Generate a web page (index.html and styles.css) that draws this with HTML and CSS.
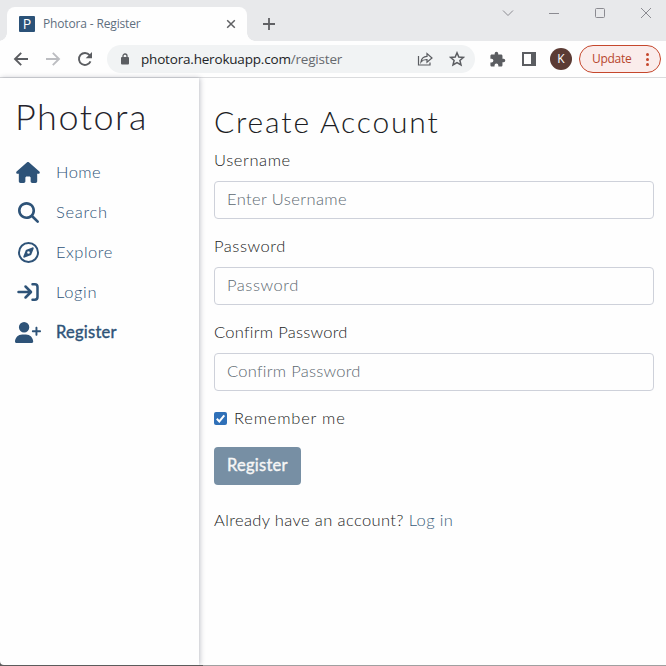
FILE: index.html
```html
<!DOCTYPE html>
<html lang="en">
<head>
<meta charset="utf-8">
<title>Photora - Register</title>
<link rel="stylesheet" href="styles.css">
</head>
<body>
<div class="window">
  <header class="tabstrip">
    <div class="tab">
      <span class="favicon">P</span>
      <span class="tab-title">Photora - Register</span>
      <svg class="tab-close" width="10" height="10" viewBox="0 0 10 10"><path d="M1.2 1.2l7.6 7.6M8.8 1.2L1.2 8.8"/></svg>
    </div>
    <svg class="new-tab" width="14" height="14" viewBox="0 0 14 14"><path d="M7 1v12M1 7h12"/></svg>
    <div class="window-controls">
      <svg width="12" height="12" viewBox="0 0 12 12"><path d="M1 3.5l5 5 5-5"/></svg>
      <svg width="12" height="12" viewBox="0 0 12 12"><path d="M1 6.5h10"/></svg>
      <svg width="12" height="12" viewBox="0 0 12 12"><rect x="1.5" y="1.5" width="9" height="9" rx="1"/></svg>
      <svg width="12" height="12" viewBox="0 0 12 12"><path d="M1 1l10 10M11 1L1 11"/></svg>
    </div>
  </header>
  <div class="toolbar">
    <svg class="nav-icon" width="16" height="16" viewBox="0 0 16 16"><path d="M15 8H2.5M8.2 1.8L2 8l6.200 6.200"/></svg>
    <svg class="nav-icon disabled" width="16" height="16" viewBox="0 0 16 16"><path d="M1 8h12.500M7.800 1.800L14 8l-6.200 6.200"/></svg>
    <svg class="nav-icon" width="16" height="16" viewBox="0 0 16 16"><path d="M13.500 10.300A6 6 0 1 1 12.600 4.100"/><path class="solid" d="M15 1v6.300H8.700z"/></svg>
    <div class="omnibox">
      <svg class="lock" width="8" height="12" viewBox="0 0 8 12"><rect x="0" y="4" width="8" height="7.500" rx="1"/><path d="M2 5V3a2 2 0 0 1 4 0v2"/></svg>
      <span class="url">photora.herokuapp.com<span class="path">/register</span></span>
      <svg class="share" width="16" height="16" viewBox="0 0 16 16"><path d="M1.500 5v9h11.500v-2.500"/><path d="M4 11c.5-4 2.800-5.600 6-5.700V2.500L15 7l-5 4.300V8.500C7.500 8.400 5.500 9 4 11z"/></svg>
      <svg class="star" width="16" height="16" viewBox="0 0 16 16"><path d="M8 1.800l1.800 4.200 4.600.4-3.500 3 1.100 4.500L8 11.500l-4 2.400 1.100-4.500-3.500-3 4.600-.4z"/></svg>
    </div>
    <svg class="puzzle" width="17" height="17" viewBox="0 0 24 24"><path d="M20.500 11H19V7c0-1.100-.9-2-2-2h-4V3.500a2.500 2.500 0 0 0-5 0V5H4c-1.100 0-2 .9-2 2v3.800h1.500a2.700 2.700 0 0 1 0 5.400H2V20c0 1.100.9 2 2 2h3.800v-1.500a2.700 2.700 0 0 1 5.400 0V22H17c1.100 0 2-.9 2-2v-4h1.500a2.500 2.500 0 0 0 0-5z"/></svg>
    <span class="sidepanel"></span>
    <span class="avatar">K</span>
    <div class="update"><span>Update</span><i class="dots"><b></b><b></b><b></b></i></div>
  </div>
  <div class="page">
    <nav class="sidebar">
      <div class="brand">Photora</div>
      <a class="item"><span class="icon"><svg width="24" height="21" viewBox="0 0 576 512"><path d="M575.8 255.500c0 18-15 32.100-32 32.100h-32l.7 160.200c0 2.700-.2 5.400-.5 8.100V472c0 22.100-17.900 40-40 40H392c-22.100 0-40-17.900-40-40V384c0-17.700-14.300-32-32-32H256c-17.700 0-32 14.300-32 32v88c0 22.100-17.900 40-40 40H104c-22.100 0-40-17.900-40-40V287.600H32c-18 0-32-14-32-32.100c0-9 3-17 10-24L266.400 8c7-7 15-8 22-8s15 2 21 7L564.800 231.500c8 7 12 15 11 24z"/></svg></span><span class="t-home">Home</span></a>
      <a class="item"><span class="icon"><svg width="21" height="21" viewBox="0 0 512 512"><path d="M416 208c0 45.900-14.900 88.300-40 122.700L502.600 457.400c12.500 12.500 12.500 32.800 0 45.300s-32.800 12.500-45.300 0L330.700 376c-34.400 25.200-76.800 40-122.700 40C93.100 416 0 322.900 0 208S93.100 0 208 0S416 93.100 416 208zM208 352a144 144 0 1 0 0-288 144 144 0 1 0 0 288z"/></svg></span><span class="t-search">Search</span></a>
      <a class="item"><span class="icon"><svg width="21" height="21" viewBox="0 0 512 512"><path fill-rule="evenodd" d="M256 0a256 256 0 1 1 0 512a256 256 0 1 1 0-512zM256 48a208 208 0 1 0 0 416a208 208 0 1 0 0-416zM306.700 325.100L162.400 380.600c-19.400 7.500-38.500-11.600-31-31l55.500-144.300c3.300-8.500 9.900-15.100 18.400-18.400l144.300-55.500c19.400-7.500 38.500 11.600 31 31L325.100 306.700c-3.200 8.500-9.900 15.100-18.400 18.400zM288 256a32 32 0 1 0-64 0 32 32 0 1 0 64 0z"/></svg></span><span class="t-explore">Explore</span></a>
      <a class="item"><span class="icon"><svg class="line" width="22" height="20" viewBox="0 0 22 20"><path d="M1.500 10h12M8.500 4.500L14 10l-5.500 5.500M15.500 2.300h2.300a2.700 2.700 0 0 1 2.700 2.700v10a2.700 2.700 0 0 1-2.700 2.700h-2.300"/></svg></span><span class="t-login">Login</span></a>
      <a class="item active"><span class="icon"><svg width="26" height="21" viewBox="0 0 640 512"><path d="M96 128a128 128 0 1 1 256 0A128 128 0 1 1 96 128zM0 482.300C0 383.800 79.800 304 178.300 304h91.400C368.200 304 448 383.800 448 482.300c0 16.400-13.300 29.700-29.700 29.700H29.700C13.300 512 0 498.700 0 482.300zM504 312V248H440c-13.300 0-24-10.700-24-24s10.700-24 24-24h64V136c0-13.300 10.700-24 24-24s24 10.700 24 24v64h64c13.300 0 24 10.700 24 24s-10.700 24-24 24H552v64c0 13.300-10.700 24-24 24s-24-10.700-24-24z"/></svg></span><span class="t-register">Register</span></a>
    </nav>
    <main class="content">
      <h1>Create Account</h1>
      <div class="field"><label class="t-user">Username</label><div class="input t-enter">Enter Username</div></div>
      <div class="field"><label class="t-pass">Password</label><div class="input t-pass">Password</div></div>
      <div class="field"><label class="t-confirm">Confirm Password</label><div class="input t-confirm">Confirm Password</div></div>
      <div class="remember"><span class="check"><svg width="13" height="13" viewBox="0 0 13 13"><path d="M2.800 6.800l2.500 2.600 5-6"/></svg></span><span class="t-remember">Remember me</span></div>
      <div class="button"><span class="t-register">Register</span></div>
      <p class="already">Already have an account? <a>Log in</a></p>
    </main>
  </div>
</div>
</body>
</html>
```
FILE: styles.css
```css
* { box-sizing: border-box; }
body { margin: 0; background: linear-gradient(90deg, #5c5c5c 203px, #a0a0a0 203px); font-family: Lato, "Open Sans", sans-serif; }
svg { display: block; flex: none; }
.window { height: 665px; background: #fefefe; border-bottom-left-radius: 4px; overflow: hidden; display: flex; flex-direction: column; }
.tabstrip { height: 41px; flex: none; background: #e8e9eb; display: flex; align-items: flex-start; padding-left: 7px; }
.tab { width: 240px; height: 34px; margin-top: 7px; background: #fefefe; border-radius: 8px 8px 0 0; display: flex; align-items: center; padding: 0 11px 0 12px; position: relative; }
.tab::before, .tab::after { content: ""; position: absolute; bottom: 0; width: 8px; height: 8px; }
.tab::before { left: -8px; background: radial-gradient(circle at 0 0, transparent 7.5px, #fefefe 8px); }
.tab::after { right: -8px; background: radial-gradient(circle at 100% 0, transparent 7.5px, #fefefe 8px); }
.favicon { width: 16px; height: 16px; border-radius: 1px; background: #2b5278; color: #fff; font: 14px/16px "Open Sans", sans-serif; text-align: center; }
.tab-title { margin-left: 8px; font: 12px/16px "Open Sans", sans-serif; letter-spacing: -.15px; color: #5f6f7e; white-space: nowrap; }
.tab-close { margin-left: auto; fill: none; stroke: #5f6063; stroke-width: 1.5; }
.new-tab { margin: 17px 0 0 15px; fill: none; stroke: #606164; stroke-width: 1.8; }
.window-controls { margin: 7px 14px 0 auto; display: flex; gap: 34px; }
.window-controls svg { fill: none; stroke: #8b8b91; stroke-width: 1; }
.toolbar { height: 37px; flex: none; border-bottom: 1px solid #dadbdd; display: flex; align-items: center; padding: 0 5px 0 13px; }
.nav-icon { margin-right: 16px; fill: none; stroke: #5b5d61; stroke-width: 1.9; }
.nav-icon.disabled { stroke: #bcbdc1; }
.nav-icon .solid { fill: #5b5d61; stroke: none; }
.omnibox { width: 368px; height: 28px; margin-left: -2px; border-radius: 14px; background: #f1f3f4; display: flex; align-items: center; padding: 0 10px 0 14px; }
.lock { fill: #5b5d61; }
.lock path { fill: none; stroke: #5b5d61; stroke-width: 1.3; }
.url { margin-left: 12px; font: 13.5px/20px "Open Sans", sans-serif; letter-spacing: -.19px; color: #222326; white-space: nowrap; }
.path { color: #66696e; }
.share, .star { fill: none; stroke: #5b5d61; stroke-width: 1.2; }
.share { margin-left: auto; }
.star { margin-left: 16px; stroke-width: 1.5; }
.puzzle { margin-left: 14px; fill: #5b5d61; }
.sidepanel { width: 14px; height: 14px; margin-left: 16px; border: 2px solid #5b5d61; border-right-width: 5px; }
.avatar { width: 22px; height: 22px; margin-left: 14px; border-radius: 50%; background: #5b3b34; color: #fff; font: 12px/22px "Open Sans", sans-serif; text-align: center; }
.update { width: 82px; height: 28px; margin-left: 7px; border: 1px solid #c5472c; border-radius: 14px; background: #faeceb; color: #b7462d; display: flex; align-items: center; padding: 0 11px 0 12px; font: 12px/16px "Open Sans", sans-serif; letter-spacing: -.3px; }
.dots { margin-left: auto; display: grid; gap: 2px; }
.dots b { width: 3px; height: 3px; border-radius: 50%; background: #c5472c; }
.page { flex: 1; display: flex; }
.sidebar { width: 199px; box-shadow: 1px 0 5px rgba(30, 35, 60, .28); padding: 14px 15px; color: #2e5378; }
.brand { height: 48px; margin-bottom: 12px; font-size: 36px; line-height: 48px; font-weight: 300; letter-spacing: 1.5px; color: #25232c; white-space: nowrap; }
.item { height: 40px; display: flex; align-items: center; font-size: 16.5px; font-weight: 300; white-space: nowrap; }
.icon { width: 26px; margin-right: 15px; display: flex; justify-content: center; }
.icon svg { fill: #2e5378; }
.icon svg.line { fill: none; stroke: #2e5378; stroke-width: 2.5; stroke-linecap: round; stroke-linejoin: round; }
.content { flex: 1; min-width: 0; padding: 25px 12px 0 15px; font-size: 16.5px; line-height: 24px; font-weight: 300; color: #1b1d24; }
h1 { margin: 0 0 9px; font-size: 30px; line-height: 36px; font-weight: 300; letter-spacing: 1.85px; white-space: nowrap; }
.field { margin-bottom: 15px; }
.field label { display: block; margin-bottom: 9px; }
.input { height: 38px; border: 1px solid #ced1da; border-radius: 4px; padding: 5px 12px; color: #5c6870; }
.remember { display: flex; align-items: center; height: 24px; margin-bottom: 17px; }
.check { width: 13px; height: 13px; margin-right: 7px; border-radius: 2px; background: #2f70b8; }
.check svg { fill: none; stroke: #fff; stroke-width: 2; }
.button { width: 87px; height: 38px; border-radius: 4px; background: #778fa4; color: #f6f6f6; padding: 6px 13px; }
.already { margin: 23px 0 0; letter-spacing: .38px; white-space: nowrap; }
.already a { color: #3a5d7b; }
.item .t-home, .item .t-search, .item .t-explore, .item .t-login, .item .t-register { line-height: 20px; }
.t-home { letter-spacing: .45px; }
.t-search { letter-spacing: .7px; }
.t-explore { letter-spacing: .5px; }
.t-login { letter-spacing: .65px; }
.t-register { font-weight: 400; letter-spacing: .25px; -webkit-text-stroke: .4px currentColor; }
.t-user { letter-spacing: .6px; }
.t-enter { letter-spacing: .4px; }
.t-pass { letter-spacing: .55px; }
.t-confirm { letter-spacing: .26px; }
.t-remember { letter-spacing: .8px; }
```
